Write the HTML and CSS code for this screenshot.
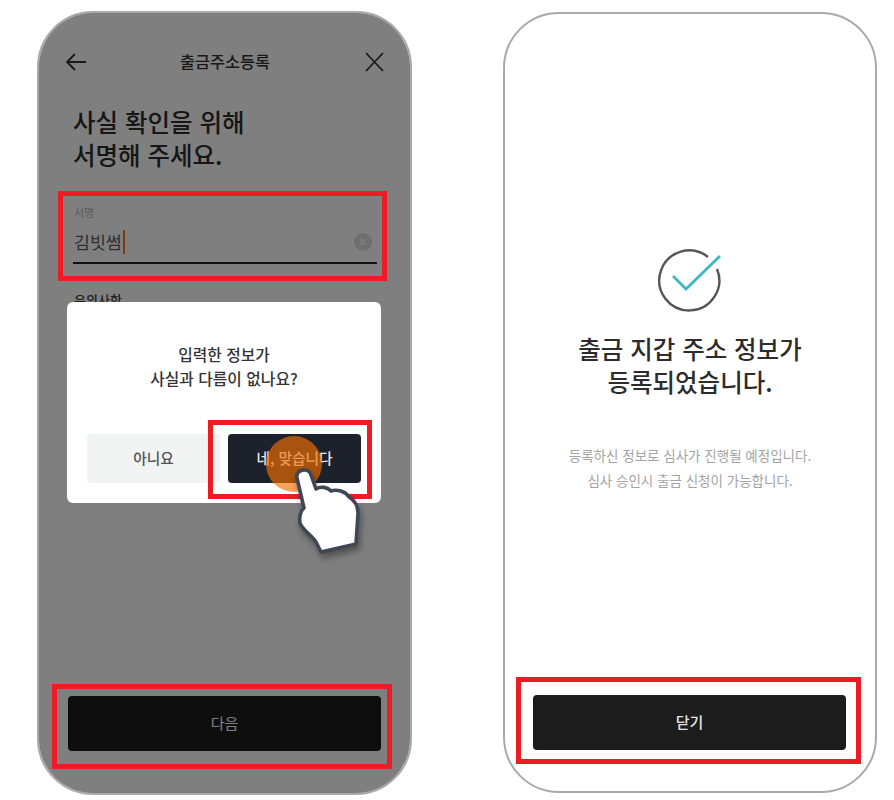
FILE: index.html
```html
<!DOCTYPE html>
<html lang="ko">
<head>
<meta charset="utf-8">
<title>출금주소등록</title>
<link rel="stylesheet" href="styles.css">
</head>
<body>
<main class="stage">
  <section class="phone phone-sign">
    <header class="topbar">
      <svg class="nav-icon" viewBox="0 0 22 22" aria-hidden="true"><path d="M21 11H2M10 3l-8 8 8 8"/></svg>
      <h1 class="topbar-title">출금주소등록</h1>
      <svg class="nav-icon" viewBox="0 0 22 22" aria-hidden="true"><path d="M3 2l17 18M20 2L3 20"/></svg>
    </header>
    <h2 class="headline">사실 확인을 위해<br>서명해 주세요.</h2>
    <div class="field callout callout-field">
      <label class="field-label">서명</label>
      <div class="field-row">
        <span class="field-value">김빗썸</span><span class="caret"></span>
        <span class="clear"><svg viewBox="0 0 18 18" aria-hidden="true"><path d="M6 6l6 6M12 6l-6 6"/></svg></span>
      </div>
    </div>
    <p class="notes-title">유의사항</p>
    <div class="footer footer-sign callout callout-next">
      <button class="btn-primary">다음</button>
    </div>
    <div class="overlay">
      <div class="dialog">
        <p class="dialog-text">입력한 정보가<br>사실과 다름이 없나요?</p>
        <div class="dialog-actions">
          <button class="btn-dialog btn-no">아니요</button>
          <button class="btn-dialog btn-yes callout callout-yes">네, 맞습니다
            <span class="tap-dot"></span>
            <svg class="hand" viewBox="290 465 75 95" aria-hidden="true"><path d="M297 478C295 469 309 467 311 475L316 489C321 486 327 487 331 491C337 489 345 491 349 497C354 500 358 506 358 513L356 544L321 552L316 542C311 534 302 530 300 523C299 516 301 510 304 508Z"/></svg>
          </button>
        </div>
      </div>
    </div>
  </section>

  <section class="phone phone-done">
    <svg class="done-icon" viewBox="654 245 72 70" aria-hidden="true">
      <path class="done-ring" d="M708 257A30 30 0 1 0 717 269"/>
      <path class="done-check" d="M673 276L686 289L720 256"/>
    </svg>
    <h2 class="done-title">출금 지갑 주소 정보가<br>등록되었습니다.</h2>
    <p class="done-text">등록하신 정보로 심사가 진행될 예정입니다.<br>심사 승인시 출금 신청이 가능합니다.</p>
    <div class="footer footer-done callout callout-close">
      <button class="btn-primary btn-close">닫기</button>
    </div>
  </section>
</main>
</body>
</html>
```

FILE: styles.css
```css
* { box-sizing: border-box; }

html, body { margin: 0; padding: 0; background: #fff; }

body {
  font-family: "Noto Sans CJK KR", "Noto Sans", sans-serif;
  color: #333;
}

.stage {
  display: flex;
  align-items: flex-start;
  gap: 91px;
  padding-left: 37px;
  height: 800px;
  overflow: hidden;
}

.phone {
  position: relative;
  display: flex;
  flex-direction: column;
  background: #fff;
  border: 2px solid #a9a9a9;
  border-radius: 56px;
}

.phone-sign { width: 375px; height: 784px; margin-top: 11px; }
.phone-done { width: 374px; height: 781px; margin-top: 12px; align-items: center; }

/* red annotation frames */
.callout { position: relative; }
.callout::after {
  content: "";
  position: absolute;
  border: 5px solid #ed1c24;
  z-index: 3;
  pointer-events: none;
}
.callout-field::after { inset: -14px -10px -17px -15px; }
.callout-next::after  { inset: -12px 18px 24px 13px; }
.callout-yes::after   { inset: -14px -11px -16px -20px; }
.callout-close::after { inset: -18px 14px 27px 11px; }

/* header */
.topbar {
  display: flex;
  align-items: center;
  justify-content: space-between;
  height: 40px;
  margin-top: 29px;
  padding: 0 25px 0 26px;
}
.topbar-title {
  margin: 0;
  padding-bottom: 2px;
  font-size: 16.3px;
  font-weight: 500;
  color: #333;
}
.nav-icon { width: 22px; height: 22px; fill: none; stroke: #333; stroke-width: 1.8; }

.headline {
  margin: 23px 0 0 34px;
  font-size: 24.5px;
  font-weight: 500;
  line-height: 33px;
  color: #2c2c2c;
}

/* field */
.field { margin: 34px 33px 0 34px; }
.field-label {
  display: block;
  padding-left: 1px;
  font-size: 11px;
  line-height: 14px;
  color: #b4b4b4;
}
.field-row {
  position: relative;
  display: flex;
  align-items: center;
  height: 45px;
  padding-top: 3px;
  border-bottom: 2px solid #222;
}
.field-value { padding-left: 1px; font-size: 17.3px; line-height: 24px; color: #5c5c5c; }
.caret { width: 2px; height: 24px; background: #f57c20; margin-left: 1px; }
.clear {
  display: flex;
  margin-left: auto;
  margin-right: 5px;
  width: 18px;
  height: 18px;
  border-radius: 50%;
  background: #ddd;
}
.clear svg { width: 18px; height: 18px; fill: none; stroke: #fff; stroke-width: 1.4; }

.notes-title {
  margin: 26px 0 0 35px;
  font-size: 13px;
  line-height: 20px;
  font-weight: 500;
  color: #444;
}

/* footer buttons */
.footer { margin-top: auto; width: 100%; padding: 0 29px 42px 29px; }
.footer-done { padding: 0 29px 41px 28px; }
.btn-primary {
  display: block;
  width: 100%;
  height: 55px;
  padding: 0 0 3px;
  border: 0;
  border-radius: 4px;
  background: #1c1c1c;
  color: #fff;
  font: 500 15px "Noto Sans CJK KR", sans-serif;
}
.phone-sign .btn-primary { font-weight: 400; }
.btn-close { color: #e4e4e4; }

/* dim + dialog */
.overlay {
  position: absolute;
  inset: 0;
  z-index: 1;
  padding: 289px 0 0 28px;
  border-radius: 54px;
  background: rgba(0, 0, 0, 0.5);
}
.dialog {
  width: 314px;
  height: 201px;
  padding: 41px 20px 20px;
  border-radius: 6px;
  background: #fff;
}
.dialog-text {
  margin: 0;
  text-align: center;
  font-size: 15.8px;
  font-weight: 500;
  line-height: 24px;
  color: #333;
}
.dialog-actions { display: flex; gap: 8px; margin-top: 43px; }
.btn-dialog {
  width: 133px;
  height: 49px;
  padding: 0 0 3px;
  border: 0;
  border-radius: 4px;
  font: 500 14.7px "Noto Sans CJK KR", sans-serif;
}
.btn-no { background: #f2f3f3; color: #555; }
.btn-yes { background: #1c212b; color: #e6e6e6; }

.tap-dot {
  position: absolute;
  left: 38px;
  top: 2px;
  width: 56px;
  height: 56px;
  border-radius: 50%;
  background: rgba(245, 110, 0, 0.65);
  z-index: 4;
}
.hand {
  position: absolute;
  left: 62px;
  top: 31px;
  width: 75px;
  height: 95px;
  z-index: 5;
  overflow: visible;
  fill: #fff;
  stroke: #3f4654;
  stroke-width: 3.6;
  stroke-linejoin: round;
  filter: drop-shadow(2px 5px 3px rgba(0, 0, 0, 0.35));
}

/* success screen */
.done-icon { width: 72px; height: 70px; margin-top: 231px; fill: none; flex: none; }
.done-ring { stroke: #555; stroke-width: 2.4; }
.done-check { stroke: #3bb8c4; stroke-width: 2.8; }
.done-title {
  margin: 17px 0 0;
  text-align: center;
  font-size: 24.5px;
  font-weight: 500;
  line-height: 33px;
  color: #2c2c2c;
}
.done-text {
  margin: 45px 0 0;
  text-align: center;
  font-size: 13.5px;
  line-height: 25px;
  color: #a3a3a3;
}
```
